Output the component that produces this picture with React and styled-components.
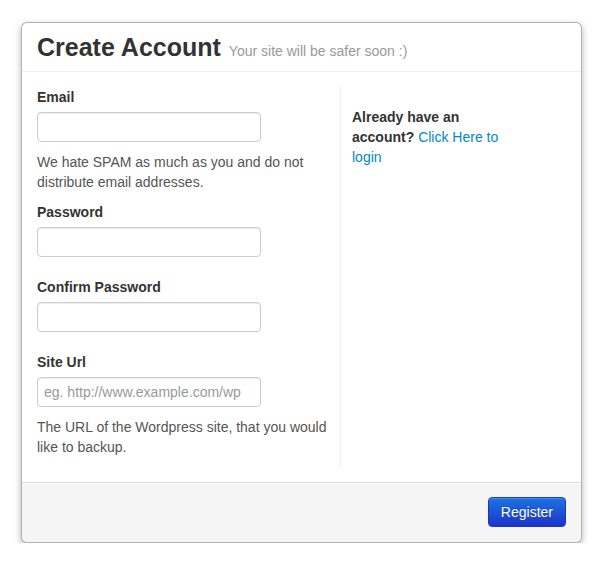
import React, { useState } from 'react';
import styled, { createGlobalStyle } from 'styled-components';

const GlobalStyle = createGlobalStyle`
    body {
        margin: 0;
        background: #fff;
        font-family: "Liberation Sans", Arial, sans-serif;
        font-size: 14px;
        line-height: 20px;
        color: #333;
    }
`;

const Page = styled.div`
    padding: 22px 0 0 21px;
`;

const Modal = styled.div`
    width: 561px;
    box-sizing: border-box;
    background: #fff;
    border: 1px solid rgba(0, 0, 0, 0.3);
    border-radius: 6px;
    box-shadow: 0 3px 7px rgba(0, 0, 0, 0.3);
`;

const Header = styled.div`
    padding: 9px 15px;
    border-bottom: 1px solid #eee;
    display: flex;
    align-items: baseline;
    gap: 8px;
`;

const Title = styled.h3`
    margin: 0;
    font-size: 25px;
    font-weight: bold;
    line-height: 30px;
    color: #333;
`;

const Subtitle = styled.small`
    font-size: 14px;
    color: #999;
`;

const Body = styled.div`
    padding: 15px;
    display: flex;
`;

const FormColumn = styled.div`
    width: 293px;
    padding-right: 10px;
    border-right: 1px solid #eee;
`;

const SideColumn = styled.div`
    width: 155px;
    padding: 20px 0 0 11px;
`;

const Group = styled.div`
    padding-bottom: 10px;
`;

const Label = styled.label`
    display: block;
    margin-bottom: 5px;
    font-weight: bold;
    color: #333;
`;

const Input = styled.input`
    display: block;
    box-sizing: border-box;
    width: 224px;
    height: 30px;
    margin: 0 0 10px;
    padding: 4px 6px;
    font-family: inherit;
    font-size: 14px;
    color: #555;
    border: 1px solid #ccc;
    border-radius: 4px;
    box-shadow: inset 0 1px 1px rgba(0, 0, 0, 0.075);
    outline: none;

    &::placeholder {
        color: #999;
    }
`;

const Help = styled.p`
    margin: 0;
    color: #555;
`;

const Prompt = styled.p`
    margin: 0;
    color: #333;
`;

const Strong = styled.strong`
    font-weight: bold;
`;

const Link = styled.a`
    color: #0088cc;
    text-decoration: none;
`;

const Footer = styled.div`
    padding: 14px 15px 15px;
    background: #f5f5f5;
    border-top: 1px solid #ddd;
    border-radius: 0 0 6px 6px;
    box-shadow: inset 0 1px 0 #fff;
    display: flex;
    justify-content: flex-end;
`;

const Button = styled.button`
    height: 30px;
    padding: 0 12px;
    font-family: inherit;
    font-size: 14px;
    color: #fff;
    background: linear-gradient(to bottom, #1b74e2, #1f33c9);
    border: 1px solid #1a3bb8;
    border-radius: 4px;
    box-shadow: inset 0 1px 0 rgba(255, 255, 255, 0.2);
    text-shadow: 0 -1px 0 rgba(0, 0, 0, 0.2);
    cursor: pointer;
`;

const fields = [
    { id: 'email', label: 'Email', type: 'text', help: 'We hate SPAM as much as you and do not distribute email addresses.' },
    { id: 'password', label: 'Password', type: 'password' },
    { id: 'confirm', label: 'Confirm Password', type: 'password' },
    { id: 'site', label: 'Site Url', type: 'text', placeholder: 'eg. http://www.example.com/wp', help: 'The URL of the Wordpress site, that you would like to backup.' },
];

function App() {
    const [values, setValues] = useState({});

    return (
        <Page>
            <GlobalStyle />
            <Modal>
                <Header>
                    <Title>Create Account</Title>
                    <Subtitle>Your site will be safer soon :)</Subtitle>
                </Header>
                <Body>
                    <FormColumn>
                        {fields.map((field) => (
                            <Group key={field.id}>
                                <Label htmlFor={field.id}>{field.label}</Label>
                                <Input
                                    id={field.id}
                                    type={field.type}
                                    placeholder={field.placeholder}
                                    value={values[field.id] || ''}
                                    onChange={(event) => {
                                        setValues({ ...values, [field.id]: event.target.value });
                                    }}
                                />
                                {field.help && <Help>{field.help}</Help>}
                            </Group>
                        ))}
                    </FormColumn>
                    <SideColumn>
                        <Prompt>
                            <Strong>Already have an account?</Strong> <Link href="#">Click Here to login</Link>
                        </Prompt>
                    </SideColumn>
                </Body>
                <Footer>
                    <Button type="button">Register</Button>
                </Footer>
            </Modal>
        </Page>
    );
}

export default App;
